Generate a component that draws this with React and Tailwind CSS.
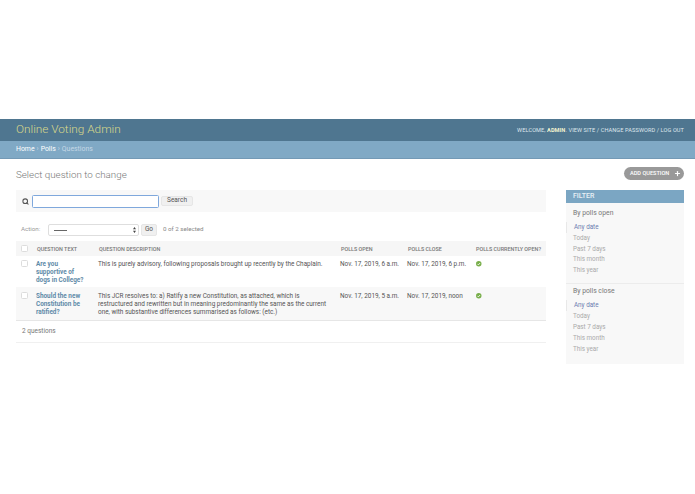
import React from 'react';
import {Search, Plus} from 'lucide-react';

const rows = [
    {
        title: ['Are you', 'supportive of', 'dogs in College?'],
        description: ['This is purely advisory, following proposals brought up recently by the Chaplain.'],
        open: 'Nov. 17, 2019, 6 a.m.',
        close: 'Nov. 17, 2019, 6 p.m.',
    },
    {
        title: ['Should the new', 'Constitution be', 'ratified?'],
        description: [
            'This JCR resolves to: a) Ratify a new Constitution, as attached, which is',
            'restructured and rewritten but in meaning predominantly the same as the current',
            'one, with substantive differences summarised as follows: (etc.)',
        ],
        open: 'Nov. 17, 2019, 5 a.m.',
        close: 'Nov. 17, 2019, noon',
    },
];

const Checkbox = () => (
    <div className="w-[7px] h-[7px] rounded-[1.5px] border border-[#dcdcdc] bg-white"></div>
);

const CheckIcon = () => (
    <svg viewBox="0 0 10 10" className="w-[5.5px] h-[5.5px] mt-[1px] ml-[2px] overflow-visible">
        <circle cx="5" cy="5" r="5" fill="#78ae4a"/>
        <path d="M2.6 5.2 L4.4 7 L7.5 3.6" fill="none" stroke="#fff" strokeWidth="1.6"/>
    </svg>
);

const FilterGroup = ({name}) => (
    <div>
        <h3 className="pl-[7px] text-[6.8px] leading-[10px] text-[#777]">{name}</h3>
        <ul className="mt-[4px] text-[6.3px] leading-[10.8px] text-[#aaa]">
            <li className="pl-[7px] border-l border-[#e8e8e8] text-[#6b7db0]">Any date</li>
            <li className="pl-[7px]">Today</li>
            <li className="pl-[7px]">Past 7 days</li>
            <li className="pl-[7px]">This month</li>
            <li className="pl-[7px]">This year</li>
        </ul>
    </div>
);

const App = () => {
    return (
        <div className="w-[695px] h-[494px] overflow-hidden bg-white pt-[119px] font-['Roboto','Liberation_Sans',sans-serif]">
            {/* Header */}
            <div className="h-[22px] bg-[#4f7690] flex items-center justify-between pl-[16px] pr-[11px]">
                <div className="text-[11.8px] font-light text-[#d9d98a]">Online Voting Admin</div>
                <div className="text-[5.6px] tracking-[0.1px] text-[#dfe8ee]">
                    WELCOME, <strong className="font-bold text-[#f5f5d0]">ADMIN</strong>. VIEW SITE / CHANGE PASSWORD / LOG OUT
                </div>
            </div>

            {/* Breadcrumbs */}
            <div className="h-[18px] bg-[#80a9c5] border-b border-[#7399b5] flex items-center pl-[16px] text-[6.9px] text-white">
                <span>Home</span>
                <span className="mx-[2px] text-[#c5d8e5]">›</span>
                <span>Polls</span>
                <span className="mx-[2px] text-[#c5d8e5]">›</span>
                <span className="text-[#c5d8e5]">Questions</span>
            </div>

            <div className="flex pl-[16px] pr-[11px]">
                {/* Main column */}
                <div className="w-[530px]">
                    <h1 className="mt-[9px] text-[9.8px] leading-[14px] font-light text-[#777]">Select question to change</h1>

                    <div className="mt-[8px] h-[22px] bg-[#f8f8f8] flex items-center">
                        <Search className="w-[7px] h-[7px] ml-[6px] text-[#555]" strokeWidth={3.5}/>
                        <div className="ml-[3px] w-[127px] h-[13px] bg-white border border-[#7fa8dc] rounded-[1.5px]"></div>
                        <div className="ml-[2px] w-[32px] h-[10px] bg-[#f0f0f0] border border-[#e6e6e6] rounded-[2px] flex items-center justify-center text-[6.5px] text-[#555]">Search</div>
                    </div>

                    <div className="mt-[12px] h-[12px] flex items-center text-[6.2px] text-[#999]">
                        <span className="ml-[5px] w-[27px]">Action:</span>
                        <div className="w-[91px] h-[12px] border border-[#dedede] rounded-[2px] bg-white flex items-center justify-between pl-[5px] pr-[2px]">
                            <span className="w-[13px] h-px bg-[#666]"></span>
                            <svg viewBox="0 0 4 8" className="w-[3px] h-[6px]">
                                <path d="M2 0 L4 3 L0 3 Z M2 8 L4 5 L0 5 Z" fill="#444"/>
                            </svg>
                        </div>
                        <div className="ml-[2px] w-[16px] h-[12px] bg-[#f0f0f0] border border-[#e6e6e6] rounded-[2px] flex items-center justify-center text-[6.5px] text-[#555]">Go</div>
                        <span className="ml-[6px] text-[#888]">0 of 2 selected</span>
                    </div>

                    <table className="mt-[5px] w-[530px] table-fixed border-collapse text-[6.4px] leading-[8px] text-[#555]">
                        <colgroup>
                            <col className="w-[16px]"/>
                            <col className="w-[62px]"/>
                            <col className="w-[242px]"/>
                            <col className="w-[67px]"/>
                            <col className="w-[68px]"/>
                            <col className="w-[75px]"/>
                        </colgroup>
                        <thead>
                            <tr className="h-[15px] bg-[#f6f6f6] text-left text-[5.4px] text-[#777]">
                                <th className="pl-[5px] font-medium"><Checkbox/></th>
                                <th className="pl-[5px] font-medium">QUESTION TEXT</th>
                                <th className="pl-[5px] font-medium">QUESTION DESCRIPTION</th>
                                <th className="pl-[5px] font-medium">POLLS OPEN</th>
                                <th className="pl-[5px] font-medium">POLLS CLOSE</th>
                                <th className="pl-[5px] font-medium">POLLS CURRENTLY OPEN?</th>
                            </tr>
                        </thead>
                        <tbody>
                            {rows.map((row, i) => (
                                <tr key={i} className={i === 1 ? 'bg-[#f8f8f8] border-b border-[#e6e6e6] align-top' : 'align-top'}>
                                    <td className={i === 1 ? 'pl-[5px] pt-[5px] pb-[4px]' : 'pl-[5px] pt-[4px] pb-[3px]'}><Checkbox/></td>
                                    <td className={i === 1 ? 'pl-[4px] pt-[5px] pb-[4px] font-bold text-[#5f8ba8]' : 'pl-[4px] pt-[4px] pb-[3px] font-bold text-[#5f8ba8]'}>
                                        {row.title.map((line) => <div key={line}>{line}</div>)}
                                    </td>
                                    <td className={i === 1 ? 'pl-[4px] pt-[5px] pb-[4px] whitespace-nowrap' : 'pl-[4px] pt-[4px] pb-[3px] whitespace-nowrap'}>
                                        {row.description.map((line) => <div key={line}>{line}</div>)}
                                    </td>
                                    <td className={i === 1 ? 'pl-[4px] pt-[5px] whitespace-nowrap' : 'pl-[4px] pt-[4px] whitespace-nowrap'}>{row.open}</td>
                                    <td className={i === 1 ? 'pl-[4px] pt-[5px] whitespace-nowrap' : 'pl-[4px] pt-[4px] whitespace-nowrap'}>{row.close}</td>
                                    <td className={i === 1 ? 'pl-[3px] pt-[5px]' : 'pl-[3px] pt-[4px]'}><CheckIcon/></td>
                                </tr>
                            ))}
                        </tbody>
                    </table>

                    <div className="h-[22px] border-b border-[#f0f0f0] pl-[6px] flex items-center text-[6.5px] text-[#777]">2 questions</div>
                </div>

                {/* Sidebar */}
                <div className="ml-[20px] w-[118px]">
                    <div className="mt-[8px] h-[14px] flex justify-end">
                        <div className="w-[60px] h-[13px] rounded-full bg-[#999] flex items-center justify-between pl-[6px] pr-[3px] text-[5.6px] font-medium text-white">
                            ADD QUESTION
                            <Plus className="w-[7px] h-[7px]" strokeWidth={4}/>
                        </div>
                    </div>
                    <div className="mt-[9px] h-[174px] bg-[#f8f8f8]">
                        <div className="h-[13px] bg-[#7ba6c3] flex items-center pl-[7px] text-[7px] font-medium text-[#e8f0f5]">FILTER</div>
                        <div className="pt-[5px] pb-[7px] border-b border-[#ececec]">
                            <FilterGroup name="By polls open"/>
                        </div>
                        <div className="pt-[2.5px]">
                            <FilterGroup name="By polls close"/>
                        </div>
                    </div>
                </div>
            </div>
        </div>
    );
};

export default App;
